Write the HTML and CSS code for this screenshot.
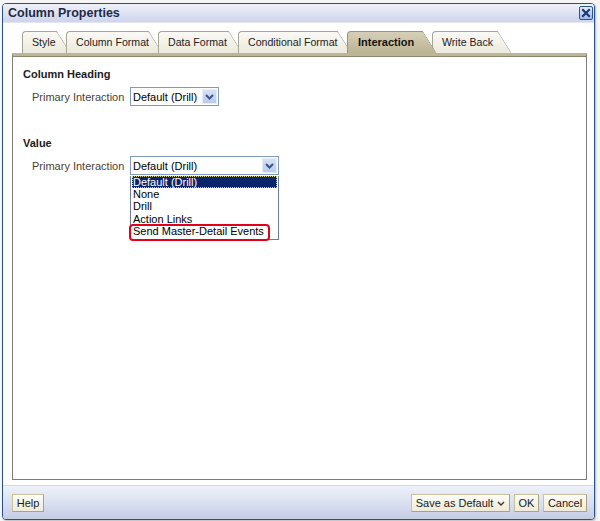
FILE: index.html
```html
<!DOCTYPE html>
<html>
<head>
<meta charset="utf-8">
<title>Column Properties</title>
<link rel="stylesheet" href="styles.css">
</head>
<body>
<div class="page">
  <div class="dialog">
    <div class="titlebar">
      <span class="title">Column Properties</span>
      <span class="close">
        <svg width="14" height="14" viewBox="0 0 14 14">
          <defs>
            <linearGradient id="cg" x1="0" y1="0" x2="0" y2="1">
              <stop offset="0" stop-color="#e6eefb"/>
              <stop offset="1" stop-color="#9fb8e2"/>
            </linearGradient>
          </defs>
          <rect x="0.5" y="0.5" width="13" height="13" rx="1.5" fill="url(#cg)" stroke="#2a5591"/>
          <path d="M4 4 L10 10 M10 4 L4 10" stroke="#1a3a78" stroke-width="2.2" stroke-linecap="square"/>
        </svg>
      </span>
    </div>
    <div class="body">
      <div class="tabs">
        <div class="tab tab-style">Style</div>
        <div class="tab tab-colfmt">Column Format</div>
        <div class="tab tab-datafmt">Data Format</div>
        <div class="tab tab-cond">Conditional Format</div>
        <div class="tab tab-inter active">Interaction</div>
        <div class="tab tab-write">Write Back</div>
      </div>
      <div class="panel">
        <div class="section-title">Column Heading</div>
        <div class="row">
          <span class="label">Primary Interaction</span>
          <div class="select select-short">
            <span class="select-text">Default (Drill)</span>
            <span class="arrow"><svg width="9" height="6" viewBox="0 0 9 6"><path d="M1 1 L4.5 4.5 L8 1" fill="none" stroke="#3f5683" stroke-width="2"/></svg></span>
          </div>
        </div>
        <div class="section-title value-title">Value</div>
        <div class="row">
          <span class="label">Primary Interaction</span>
          <div class="combo">
            <div class="select select-long">
              <span class="select-text">Default (Drill)</span>
              <span class="arrow"><svg width="9" height="6" viewBox="0 0 9 6"><path d="M1 1 L4.5 4.5 L8 1" fill="none" stroke="#3f5683" stroke-width="2"/></svg></span>
            </div>
            <ul class="list">
              <li class="item selected">Default (Drill)</li>
              <li class="item">None</li>
              <li class="item">Drill</li>
              <li class="item">Action Links</li>
              <li class="item">Send Master-Detail Events</li>
            </ul>
            <div class="callout"></div>
          </div>
        </div>
      </div>
    </div>
    <div class="footer">
      <button class="btn btn-help">Help</button>
      <span class="spacer"></span>
      <button class="btn btn-save">Save as Default <svg width="8" height="5" viewBox="0 0 8 5"><path d="M1 1 L4 4 L7 1" fill="none" stroke="#333" stroke-width="1.4"/></svg></button>
      <button class="btn btn-ok">OK</button>
      <button class="btn btn-cancel">Cancel</button>
    </div>
  </div>
</div>
</body>
</html>
```

FILE: styles.css
```css
* { box-sizing: border-box; }
html, body { margin: 0; padding: 0; }
body {
  width: 600px;
  height: 521px;
  overflow: hidden;
  background: #f6f6f6;
  font-family: "Liberation Sans", Arial, sans-serif;
  font-size: 11px;
  color: #111;
}
.page { padding: 3px 0 0 2px; }
.dialog {
  width: 593px;
  height: 517px;
  border: 1px solid #24528c;
  border-radius: 4px;
  background: #fff;
  display: flex;
  flex-direction: column;
  overflow: hidden;
  box-shadow: 1px 1px 2px rgba(0,0,0,0.25);
}
.titlebar {
  height: 19px;
  flex: none;
  display: flex;
  align-items: center;
  padding: 0 1px 0 5px;
  background: linear-gradient(#eff1f9, #dbe0f1 60%, #cdd4ec);
  border-bottom: 1px solid #e4e7f2;
}
.title {
  font-weight: bold;
  font-size: 12.5px;
  color: #1f2b47;
  flex: 1;
}
.close { display: flex; }
.body {
  flex: 1;
  display: flex;
  flex-direction: column;
  padding: 8px 7px 5px 9px;
}
.tabs {
  display: flex;
  height: 22px;
  padding-left: 10px;
  flex: none;
}
.tab {
  position: relative;
  z-index: 1;
  height: 22px;
  line-height: 21px;
  padding-left: 9px;
  margin-right: 9px;
  white-space: nowrap;
  font-size: 10.6px;
  color: #222;
  background: linear-gradient(#faf9f4, #ece9dd);
  border-top: 1px solid #a8a496;
  border-left: 1px solid #a8a496;
  border-top-left-radius: 4px;
}
.tab::after {
  content: "";
  position: absolute;
  z-index: -1;
  top: -1px;
  bottom: 0;
  right: 0;
  width: 16px;
  background: linear-gradient(#faf9f4, #ece9dd);
  border-top: 1px solid #a8a496;
  border-right: 1px solid #a8a496;
  border-top-right-radius: 2px;
  transform-origin: 0 0;
  transform: skewX(32deg);
}
.tab.active {
  z-index: 3;
  font-weight: bold;
  font-size: 11px;
  padding-left: 10px;
  color: #111;
  background: linear-gradient(#d6cfb8, #bcb395);
  border-color: #9c9478;
}
.tab.active::after {
  background: linear-gradient(#d6cfb8, #bcb395);
  border-color: #9c9478;
}
.tab-style { width: 35px; }
.tab-colfmt { width: 83px; }
.tab-datafmt { width: 71px; }
.tab-cond { width: 100px; }
.tab-inter { width: 76px; }
.tab-write { width: 66px; }

.panel {
  flex: 1;
  position: relative;
  z-index: 4;
  border: 1px solid #7c7c7c;
  border-top: 3px solid #bdb597;
  box-shadow: inset 0 1px 0 #8d866e;
  padding: 11px 10px 0 10px;
  background: #fff;
}
.section-title {
  font-weight: bold;
  line-height: 14px;
  color: #1b1b1b;
}
.value-title { margin-top: 29px; }
.row {
  display: flex;
  align-items: flex-start;
  margin-top: 6px;
  padding-left: 9px;
}
.label {
  width: 98px;
  line-height: 20px;
  color: #4a4234;
  flex: none;
}
.combo {
  position: relative;
  width: 149px;
}
.select {
  height: 19px;
  display: flex;
  align-items: center;
  border: 1px solid #7f9db9;
  background: #fff;
}
.select-short { width: 89px; }
.select-long { width: 149px; }
.select-text {
  flex: 1;
  padding-left: 2px;
  color: #000;
  white-space: nowrap;
}
.arrow {
  width: 15px;
  height: 15px;
  margin-right: 1px;
  display: flex;
  align-items: center;
  justify-content: center;
  background: linear-gradient(#d6e1f8, #b9caf0);
  border: 1px solid #e6ecfa;
}
.list {
  list-style: none;
  margin: 0;
  padding: 0 0 1px 0;
  width: 149px;
  border: 1px solid #6e7d95;
  border-top: none;
  background: #fff;
}
.item {
  height: 12.6px;
  line-height: 13.6px;
  padding-left: 2px;
  color: #000;
  white-space: nowrap;
}
.item.selected {
  margin: 1px 1px 0 1px;
  padding-left: 1px;
  height: 11.6px;
  line-height: 12.4px;
  background: #0a246a;
  color: #fff;
  outline: 1px dotted #d8d090;
  outline-offset: -1px;
}
.callout {
  position: absolute;
  left: -1px;
  top: 68px;
  width: 141px;
  height: 17px;
  border: 2px solid #e3001b;
  border-radius: 4px;
}
.footer {
  height: 34px;
  flex: none;
  display: flex;
  align-items: flex-start;
  gap: 4px;
  padding: 8px 7px 0 9px;
  background: linear-gradient(#eef1f9, #dde2f1 45%, #c4cce6);
  border-top: 1px solid #d3d9ec;
}
.spacer { flex: 1; }
.btn {
  height: 18px;
  padding: 0;
  font-family: "Liberation Sans", Arial, sans-serif;
  font-size: 11px;
  color: #1a1a1a;
  background: linear-gradient(#fdfcf5, #efebd7);
  border: 1px solid #c8c19e;
  border-right-color: #a9a27f;
  border-bottom-color: #a9a27f;
  display: flex;
  align-items: center;
  justify-content: center;
  gap: 4px;
}
.btn-help { width: 32px; }
.btn-save { width: 99px; }
.btn-ok { width: 25px; }
.btn-cancel { width: 44px; }
```
